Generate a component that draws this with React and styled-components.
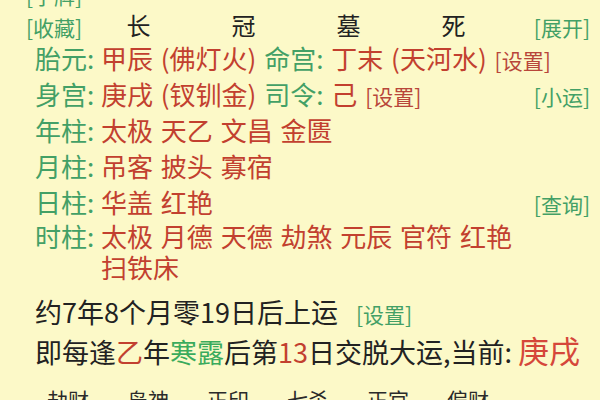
import styled, { createGlobalStyle } from "styled-components";

const GlobalStyle = createGlobalStyle`
  html, body {
    margin: 0;
    padding: 0;
    background: #fcf9c8;
  }
  body {
    font-family: "Noto Sans CJK SC", "Noto Sans", sans-serif;
    color: #222;
    overflow: hidden;
  }
`;

const Page = styled.div`
  width: 600px;
  height: 400px;
  box-sizing: border-box;
  padding: 0 10px 0 26px;
  overflow: hidden;
`;

const PillarRow = styled.div`
  display: grid;
  grid-template-columns: 60px repeat(4, 105px) 1fr;
  align-items: center;
  height: ${(p) => p.h}px;
  margin-top: ${(p) => p.mt || 0}px;
`;

const Tag = styled.span`
  font-size: 21px;
  line-height: 1;
  color: ${(p) => (p.red ? "#b8463a" : "#43a066")};
  white-space: nowrap;
  word-spacing: 0;
  justify-self: ${(p) => (p.right ? "end" : "start")};
  margin-left: ${(p) => (p.push ? "auto" : `${p.gap || 0}px`)};
`;

const Stage = styled.span`
  font-size: 24px;
  color: #222;
  text-align: center;
  position: relative;
  top: -3px;
`;

const InfoRow = styled.div`
  display: flex;
  align-items: baseline;
  padding-left: 9px;
  font-size: 26px;
  line-height: ${(p) => p.lh || 36}px;
  word-spacing: 2px;
  margin-top: ${(p) => p.mt || 0}px;
`;

const Label = styled.span`
  flex-shrink: 0;
  width: 66px;
  color: #43a066;
  white-space: nowrap;
`;

const Value = styled.span`
  color: #c2402f;
  max-width: ${(p) => (p.narrow ? "420px" : "none")};
`;

const Green = styled.span`
  color: #43a066;
`;

const Red = styled.span`
  color: ${(p) => (p.bright ? "#d5473a" : "#c2402f")};
  font-size: ${(p) => (p.big ? "31px" : "inherit")};
  line-height: ${(p) => (p.big ? 1 : "inherit")};
`;

const Line = styled.div`
  padding-left: 9px;
  font-size: 27px;
  line-height: 40px;
  color: #222;
  white-space: nowrap;
  margin-top: ${(p) => p.mt || 0}px;
`;

const Bright = styled.span`
  color: #3aab5c;
`;

const TenGods = styled.div`
  display: grid;
  grid-template-columns: repeat(6, 80px);
  padding-left: 21px;
  margin-top: 7px;
  font-size: 21px;
  line-height: 40px;
  color: #2a2a2a;
`;

const gods = ["劫财", "枭神", "正印", "七杀", "正官", "偏财"];

export default function App() {
  return (
    <>
      <GlobalStyle />
      <Page>
        <PillarRow h={30} mt={-20}>
          <Tag>[字牌]</Tag>
        </PillarRow>
        <PillarRow h={30}>
          <Tag>[收藏]</Tag>
          <Stage>长</Stage>
          <Stage>冠</Stage>
          <Stage>墓</Stage>
          <Stage>死</Stage>
          <Tag right>[展开]</Tag>
        </PillarRow>

        <InfoRow>
          <Label>胎元:</Label>
          <Value>
            甲辰 (佛灯火) <Green>命宫:</Green> 丁末 (天河水) <Tag red>[设置]</Tag>
          </Value>
        </InfoRow>
        <InfoRow>
          <Label>身宫:</Label>
          <Value>
            庚戌 (钗钏金) <Green>司令:</Green> 己 <Tag red>[设置]</Tag>
          </Value>
          <Tag push>[小运]</Tag>
        </InfoRow>
        <InfoRow>
          <Label>年柱:</Label>
          <Value>太极 天乙 文昌 金匮</Value>
        </InfoRow>
        <InfoRow>
          <Label>月柱:</Label>
          <Value>吊客 披头 寡宿</Value>
        </InfoRow>
        <InfoRow>
          <Label>日柱:</Label>
          <Value>华盖 红艳</Value>
          <Tag push>[查询]</Tag>
        </InfoRow>
        <InfoRow lh={31}>
          <Label>时柱:</Label>
          <Value narrow>太极 月德 天德 劫煞 元辰 官符 红艳 扫铁床</Value>
        </InfoRow>

        <Line mt={10}>
          约7年8个月零19日后上运<Tag gap={18}>[设置]</Tag>
        </Line>
        <Line>
          即每逢<Red>乙</Red>年<Bright>寒露</Bright>后第<Red>13</Red>日交脱大运,当前:{" "}
          <Red big bright>
            庚戌
          </Red>
        </Line>

        <TenGods>
          {gods.map((g) => (
            <span key={g}>{g}</span>
          ))}
        </TenGods>
      </Page>
    </>
  );
}
